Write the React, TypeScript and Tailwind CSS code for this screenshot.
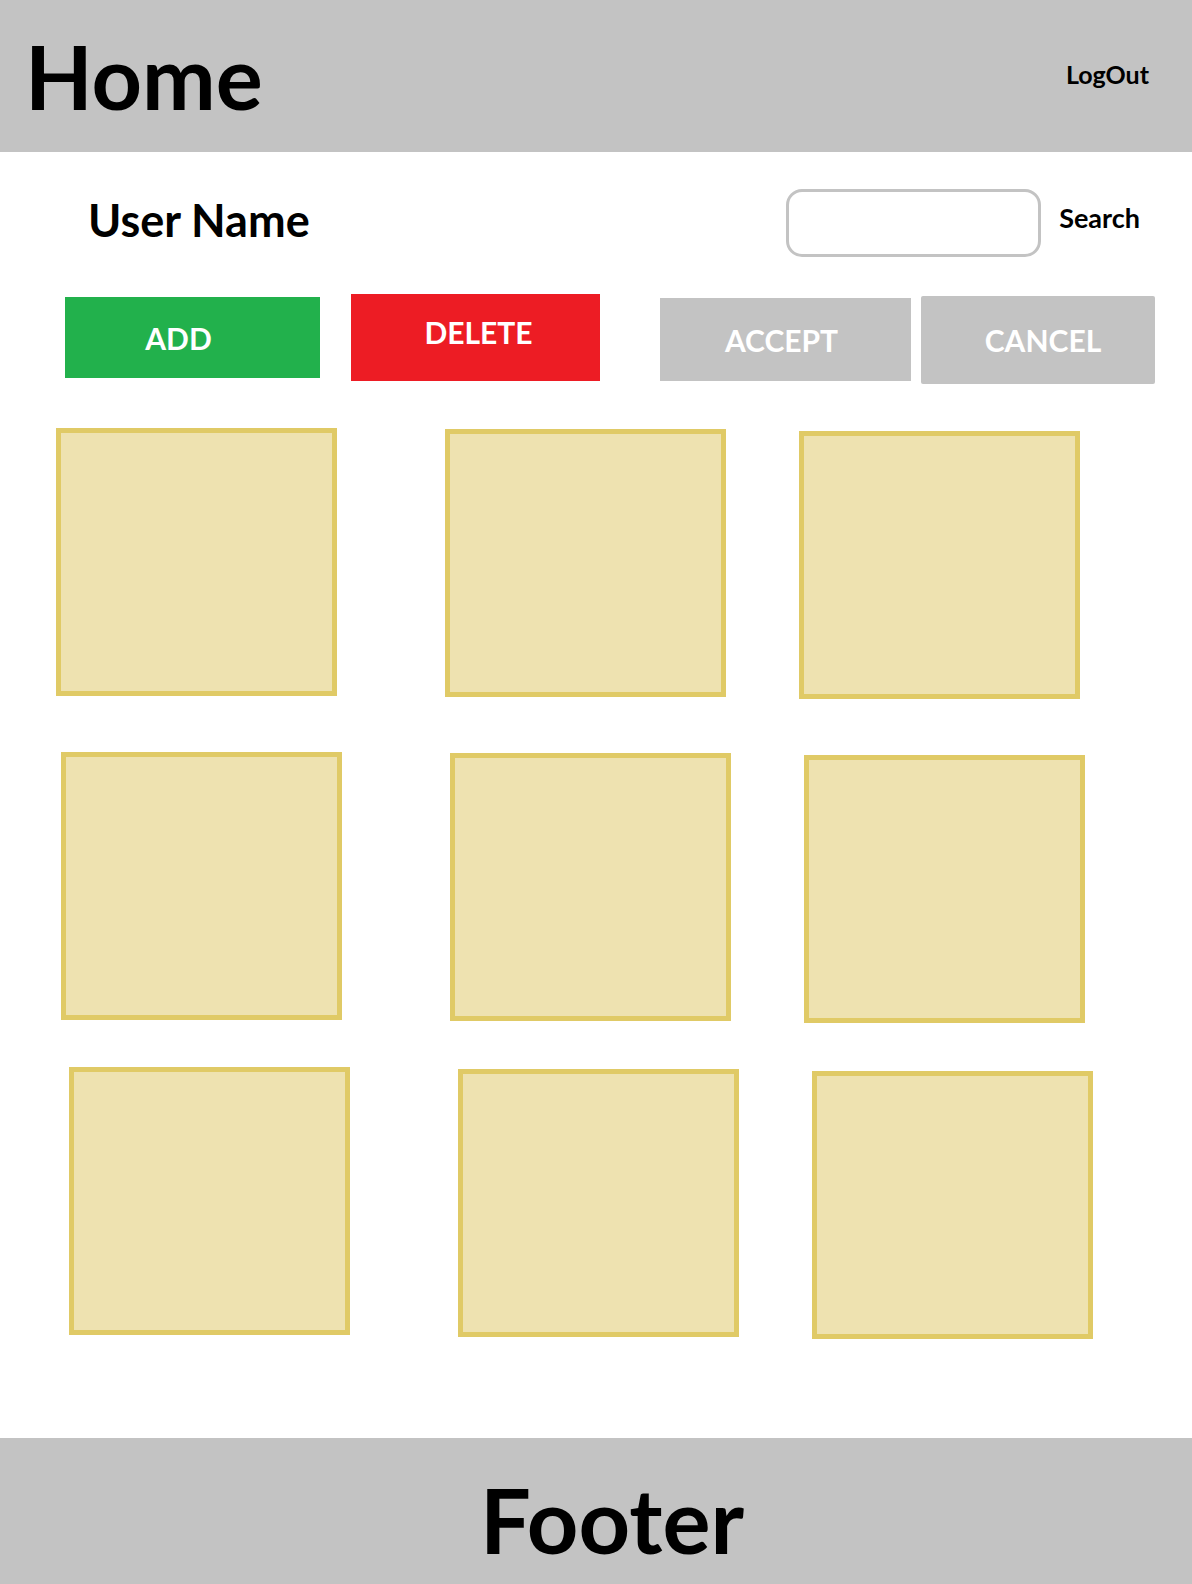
import React from "react";

const FONT = { fontFamily: "Lato, 'Open Sans', 'Liberation Sans', sans-serif" };

// 各行のカード位置（手書きモックのずれを再現）
const ROWS = [
  { pad: "pl-[56px]", tops: ["mt-0", "mt-px", "mt-[3px]"] },
  { pad: "pl-[61px]", tops: ["mt-0", "mt-px", "mt-[3px]"] },
  { pad: "pl-[69px]", tops: ["mt-0", "mt-[2px]", "mt-[4px]"] },
];

function Card({ top, extra }: { top: string; extra?: string }) {
  return (
    <div
      className={`${top} ${extra ?? ""} w-[281px] h-[268px] shrink-0 bg-[#eee2b0] border-[5px] border-[#e0ca66]`}
    />
  );
}

export default function App() {
  return (
    <div className="w-full h-[1584px] flex flex-col bg-white text-black" style={FONT}>
      {/* header */}
      <header className="h-[152px] shrink-0 bg-[#c3c3c3] flex items-start justify-between">
        <h1 className="pt-[32px] pl-[25px] text-[88px] font-bold leading-none">Home</h1>
        <button className="mt-[62px] mr-[43px] text-[25px] font-bold leading-none">LogOut</button>
      </header>

      <main className="flex-1 flex flex-col">
        {/* user row */}
        <div className="mt-[37px] h-[68px] flex items-start">
          <div className="mt-[9px] ml-[88px] text-[45px] font-bold leading-none">User Name</div>
          <div className="ml-auto w-[255px] h-[68px] rounded-[16px] border-[3px] border-[#c3c3c3] bg-white" />
          <div className="mt-[15px] ml-[18px] mr-[52px] text-[27px] font-bold leading-none">Search</div>
        </div>

        {/* action buttons */}
        <div className="mt-[37px] h-[90px] flex items-start pl-[65px] text-white text-[30px] font-bold leading-none">
          <button className="mt-[3px] w-[255px] h-[81px] bg-[#22b14c] flex items-center justify-center pr-[28px]">
            ADD
          </button>
          <button className="ml-[31px] w-[249px] h-[87px] bg-[#ed1c24] flex items-center justify-center pl-[6px] pb-[11px]">
            DELETE
          </button>
          <button className="mt-[4px] ml-[60px] w-[251px] h-[83px] bg-[#c3c3c3] flex items-center justify-center pr-[8px]">
            ACCEPT
          </button>
          <button className="mt-[2px] ml-[10px] w-[234px] h-[88px] rounded-[2px] bg-[#c3c3c3] flex items-center justify-center pl-[10px]">
            CANCEL
          </button>
        </div>

        {/* card grid */}
        <div className="mt-[44px] flex flex-col">
          {ROWS.map((r, i) => (
            <div
              key={i}
              className={`${r.pad} h-[272px] flex items-start ${i === 1 ? "mt-[52px]" : ""} ${i === 2 ? "mt-[43px]" : ""}`}
            >
              <Card top={r.tops[0]} />
              <Card top={r.tops[1]} extra="ml-[108px]" />
              <Card top={r.tops[2]} extra="ml-[73px]" />
            </div>
          ))}
        </div>
      </main>

      {/* footer */}
      <footer className="h-[146px] shrink-0 bg-[#c3c3c3] flex justify-center">
        <div className="mt-[36px] ml-[32px] text-[90px] font-bold leading-none">Footer</div>
      </footer>
    </div>
  );
}
